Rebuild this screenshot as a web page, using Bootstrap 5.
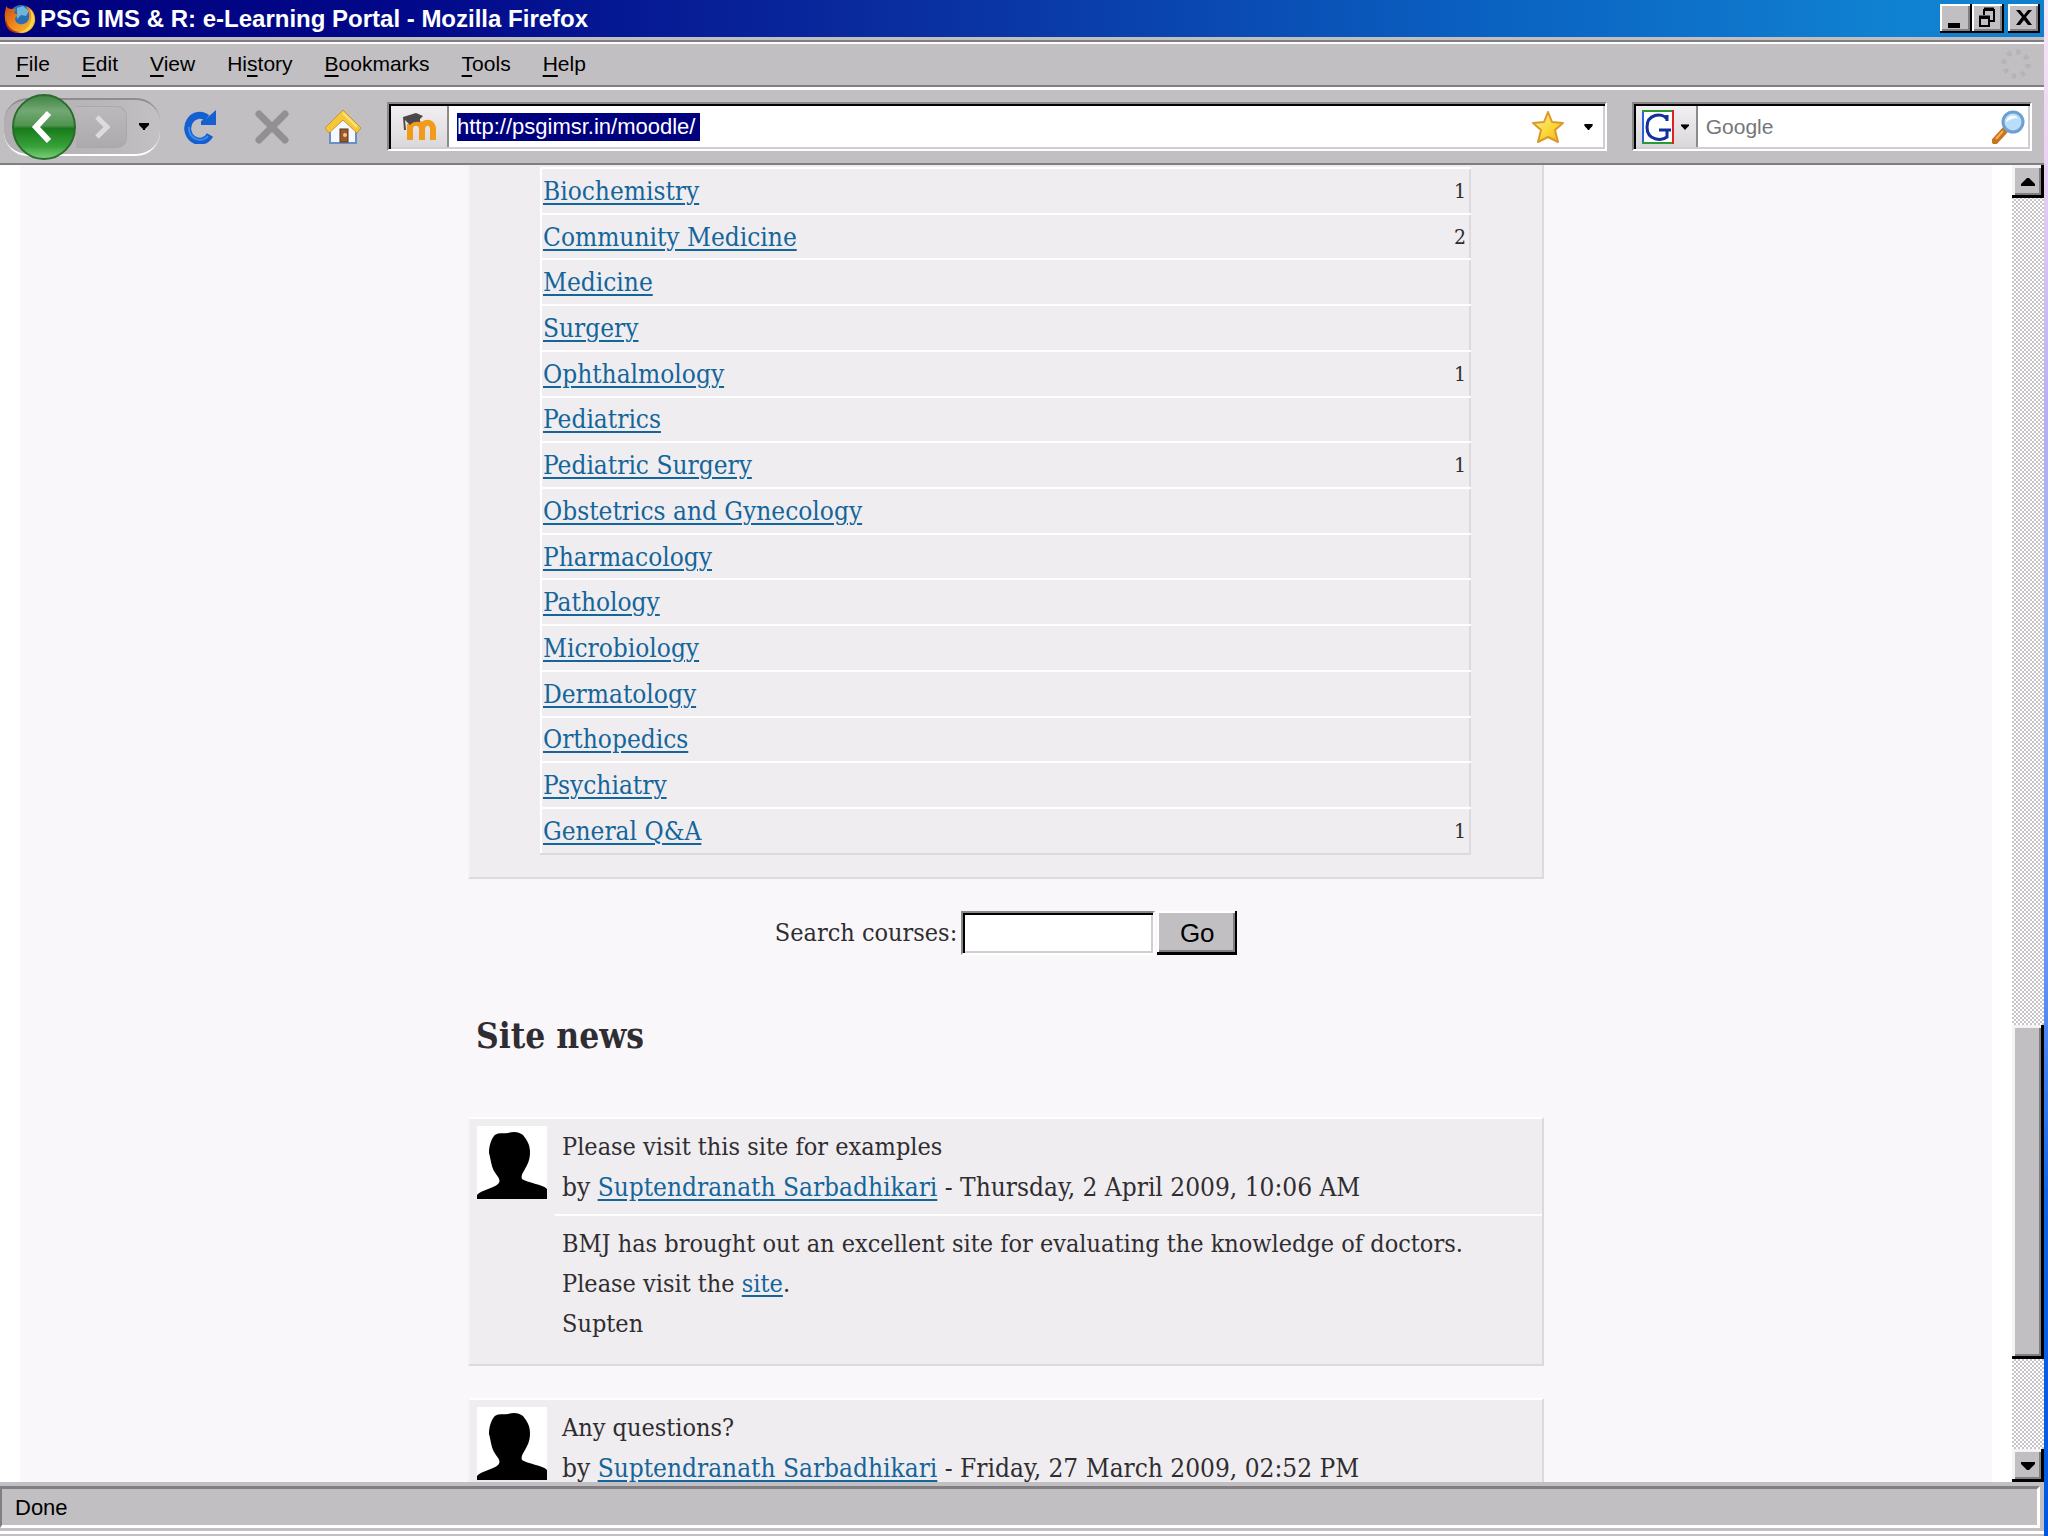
<!DOCTYPE html>
<html lang="en">
<head>
<meta charset="utf-8">
<meta name="viewport" content="width=device-width, initial-scale=1">
<title>PSG IMS &amp; R: e-Learning Portal - Mozilla Firefox</title>
<link href="https://cdn.jsdelivr.net/npm/bootstrap@5.3.0/dist/css/bootstrap.min.css" rel="stylesheet">
<style>
:root{--face:#c1bfc2;--shade:#807e82;--ink:#2f2d31;--panel:#efedf0;--edge:#dcdadf;--link:#14659a}
body{height:100vh;overflow:hidden;padding-right:4px;font-family:"Liberation Sans",Arial,sans-serif;font-size:22px;line-height:28px;color:#000;
 background:linear-gradient(#f6e8f4 0,#ecd2f2 10%,#b6b0f2 27%,#94b6f0 42%,#6a96f6 62%,#1264e6 78%,#0058e2 100%)}
svg{display:block;flex:none}
.app-window{background:var(--face)}
.title-bar,.menu-bar,.tool-bar,.status{flex:none}
.title-bar{height:37px;padding:0 4px;background:linear-gradient(90deg,#00007c 0,#02088a 20%,#0a2fa0 45%,#0a60c0 72%,#1082d2 93%,#1080cc 100%)}
.title-bar h1{font-size:24px;line-height:32px;font-weight:700;color:#fff}
.win-btn{width:32px;height:29px;padding:0;border:0;background:var(--face);box-shadow:inset -2px -2px #000,inset 2px 2px #fff,inset -4px -4px var(--shade)}
.win-btn svg{margin:auto}
.menu-bar{height:45px;padding:0 12px 0 16px;margin-top:3px;border-top:2px solid var(--shade);box-shadow:inset 0 2px #fff;font-size:21px;gap:32px}
.menu-bar a{color:#000;text-decoration:none;line-height:28px}
.menu-bar u{text-underline-offset:4px}
.tool-bar{height:80px;border-top:2px solid var(--shade);border-bottom:2px solid var(--shade);box-shadow:inset 0 3px #fff;padding:3px 12px 0 4px}
.tool-bar button{padding:0;border:0;background:none}
.nav-pill{height:58px;width:156px;border-radius:24px;border-top:2px solid #8f8d90;border-bottom:2px solid #fff;background:linear-gradient(90deg,#b1afb2,#bab8bb 70%,#c3c1c4);padding-left:8px}
.nav-pill .fwd{width:51px;height:42px;border:1px solid #aaa8ab;border-left:0;border-radius:0 10px 10px 0;background:linear-gradient(#bbb9bc,#acaaad)}
.sunk{height:49px;background:#fff;border:2px solid;border-color:#8a888b #fff #fff #8a888b;box-shadow:inset 2px 2px #000,inset -2px -2px #d0ced1}
.site-id{align-self:stretch;margin:2px 0 2px 2px;border-right:2px solid #8d8b8e;background:linear-gradient(#f1eff2,#dad8db)}
.url-text{width:243px;height:28px;padding:0;border:0;border-radius:0;background:#00007f;color:#fff;font-size:22px;line-height:28px}
.find-text{min-width:0;border:0;padding:0;background:none;font-size:21px;color:#77757a}
.find-text::placeholder{color:#77757a;opacity:1}
.view{min-height:0;background:#fff}
.page{min-width:0;margin:0 20px;background:#f9f7fa;color:var(--ink);font-family:"DejaVu Serif Condensed","DejaVu Serif",serif;font-size:25px;line-height:40px;overflow:hidden}
.page a{color:var(--link);text-decoration:underline;text-decoration-thickness:2px;text-underline-offset:3px}
.column-main{max-width:1076px}
.box{background:var(--panel);border:2px solid;border-color:#fff var(--edge) var(--edge) #f4f2f5}
.catalog{border-top:0;padding:2px 71px 22px 70px}
.catalog table{width:100%;height:688px;border-collapse:collapse;border-left:2px solid #fff;border-right:2px solid var(--edge);border-bottom:2px solid var(--edge);font-size:26px;line-height:36px}
.catalog td{padding:0 3px 0 1px;border-top:2px solid #fff}
.catalog .num{font-size:21px;text-align:right}
.find-course{margin:32px 0 61px;font-size:25px}
.find-course input{width:194px;height:44px;padding:0 6px}
.find-course label{margin-right:4px}
.go{width:80px;height:44px;border:0;padding:0;background:var(--face);font-family:"Liberation Sans",Arial,sans-serif;font-size:26px;color:#000;box-shadow:inset -2px -3px #000,inset 2px 2px #fff,inset -4px -5px var(--shade)}
.page h2{font-size:35px;line-height:40px;font-weight:700;margin:0 8px 61px}
.post{margin-bottom:32px;min-height:249px}
.portrait{width:85px;padding:7px}
.post header{padding:8px 7px 7px;border-bottom:2px solid #fff}
.post .byline{font-size:26px}
.post .words{padding:8px 7px 19px}
.post p{margin:0}
.scroller{width:32px;background:repeating-conic-gradient(#fff 0 25%,#c6c4c7 0 50%) 0 0/4px 4px}
.scroller button,.thumb{border:0;padding:0;background:var(--face);box-shadow:inset -3px -3px #000,inset 3px 3px #f4f2f5,inset -5px -5px var(--shade)}
.scroller button{height:33px;flex:none}
.scroller svg{margin:auto}
.track-top{flex:827 0 0}.thumb{flex:334 0 0}.track-end{flex:90 0 0}
.status{height:54px;padding-top:4px}
.status div{height:42px;padding:5px 13px;margin-right:4px;border:solid;border-width:3px;border-color:var(--shade) #fff #fff var(--shade);border-left-width:2px}
.status hr{margin:3px 0 0;border-top:3px solid #fff;opacity:1}
</style>
</head>
<body>
<svg width="0" height="0" class="position-absolute" aria-hidden="true">
 <symbol id="person" viewBox="0 0 70 73"><rect width="70" height="73" fill="#fff"/><path d="M17 10C20 6 27 8 31 7C37 5 42 6 46 9C50 14 53 19 53 26C53 35 50 39 48 43C45 48 44 50 45 53C50 57 66 58 70 63V73H0V69C4 64 17 62 21 58C25 54 20 50 17 45C14 39 14 34 12 27C12 20 14 14 17 10Z"/></symbol>
 <symbol id="down" viewBox="0 0 10 7"><path d="M0 0H10V2L6 6V7H4V6L0 2Z"/></symbol>
</svg>
<div class="app-window d-flex flex-column h-100">
 <div class="title-bar d-flex align-items-center">
  <svg class="me-1" width="32" height="30" viewBox="0 0 32 30"><defs><linearGradient id="fx" x2="1" y2="1"><stop stop-color="#c94a12"/><stop offset=".5" stop-color="#f08a1c"/><stop offset="1" stop-color="#f6c83a"/></linearGradient></defs><circle cx="17" cy="13" r="12" fill="#2a6fb4"/><path d="M13 4L19 2L25 7L22 12L17 11L13 15Z" fill="#6fb4dc"/><path d="M2 2C3 4 5 5 8 5L12 5L10 9L14 11L11 14C11 19 15 21 19 20C24 19 26 15 25 9C24 6 23 4 22 2C29 5 32 11 31 18C29 26 22 30 15 29C6 28 1 22 1 14C0 9 2 6 2 2Z" fill="url(#fx)"/><path d="M26 5C31 10 32 18 27 24C24 27 20 29 16 28C25 26 30 17 26 5Z" fill="#fbd64c"/><path d="M2 15C3 23 9 28 16 28C8 31 0 24 2 15Z" fill="#b5310f"/></svg>
  <h1 class="m-0 flex-grow-1">PSG IMS &amp; R: e-Learning Portal - Mozilla Firefox</h1>
  <button class="win-btn" aria-label="Minimize"><svg width="32" height="29"><path d="M8 19H20V24H8Z"/></svg></button>
  <button class="win-btn me-1" aria-label="Restore"><svg width="32" height="29" fill="none" stroke="#000" stroke-width="2"><path d="M12 11V6H22V17H18M11 6H23" /><path d="M12 5H22" stroke-width="3"/><path d="M8 14H17V22H8Z"/><path d="M7 13H18" stroke-width="3"/></svg></button>
  <button class="win-btn" aria-label="Close"><svg width="32" height="29"><path d="M8 6H12L16 11L20 6H24L18 13L24 21H20L16 16L12 21H8L14 13Z"/></svg></button>
 </div>
 <nav class="menu-bar d-flex align-items-center">
  <a href="#"><u>F</u>ile</a><a href="#"><u>E</u>dit</a><a href="#"><u>V</u>iew</a><a href="#">Hi<u>s</u>tory</a><a href="#"><u>B</u>ookmarks</a><a href="#"><u>T</u>ools</a><a href="#"><u>H</u>elp</a>
  <svg class="ms-auto" width="32" height="32" viewBox="-16 -16 32 32"><circle r="12" fill="none" stroke="#b5b3b6" stroke-width="5" stroke-dasharray="4 5.42"/></svg>
 </nav>
 <div class="tool-bar d-flex align-items-center">
  <div class="nav-pill d-flex align-items-center">
   <button aria-label="Back"><svg width="64" height="66" viewBox="0 0 64 66"><defs><linearGradient id="gr" x2="0" y2="1"><stop stop-color="#3f8443"/><stop offset=".25" stop-color="#72a873"/><stop offset=".48" stop-color="#4f9350"/><stop offset=".52" stop-color="#197a1c"/><stop offset=".8" stop-color="#36a138"/><stop offset="1" stop-color="#7fd07c"/></linearGradient></defs><ellipse cx="32" cy="33" rx="31" ry="32" fill="url(#gr)" stroke="#2a6b2e" stroke-width="2"/><path d="M37 19L24 33L37 47" fill="none" stroke="#fff" stroke-width="6"/></svg></button>
   <button class="fwd" aria-label="Forward"><svg width="50" height="40" viewBox="0 0 50 40"><path d="M21 10L31 20L21 30" fill="none" stroke="#dddbde" stroke-width="5"/></svg></button>
   <button class="ms-2 ps-1" aria-label="Recent pages"><svg width="10" height="7"><use href="#down"/></svg></button>
  </div>
  <button style="margin-left:24px" aria-label="Reload"><svg width="32" height="34" viewBox="0 0 32 34"><path d="M26 25A12 13 0 1 1 23 8" fill="none" stroke="#1560d0" stroke-width="7"/><path d="M32 0V15H17V11L23 8Z" fill="#1560d0"/><path d="M24 26A11 12 0 0 1 5 17" fill="none" stroke="#3a8bee" stroke-width="2"/></svg></button>
  <button style="margin-left:39px" aria-label="Stop"><svg width="34" height="34" viewBox="0 0 34 34"><path d="M4 4L30 30M30 4L4 30" stroke="#929093" stroke-width="7" stroke-linecap="round"/></svg></button>
  <button style="margin-left:36px" aria-label="Home"><svg width="36" height="34" viewBox="0 0 36 34"><path d="M5 17L18 6L31 17V33H5Z" fill="#f4f9ff" stroke="#6b8fc4" stroke-width="2"/><path d="M18 0L36 18L32 23L18 10L4 23L0 18Z" fill="#f5c73a" stroke="#c9962a"/><path d="M18 3L32 17" stroke="#fbe486" stroke-width="2"/><rect x="15" y="19" width="8" height="13" fill="#9a5a2a" stroke="#5e3213"/><circle cx="20" cy="25" r="2" fill="#e8c99a"/></svg></button>
  <div class="sunk d-flex align-items-center" style="margin-left:26px;flex:1221 1 0">
   <div class="site-id d-flex align-items-center" style="width:58px;padding-left:12px"><svg width="34" height="28" viewBox="0 0 34 28"><path d="M7 27V11M7 15C8 8 18 8 19 15V27M19 15C20 8 29 8 30 15V27" fill="none" stroke="#f29a1a" stroke-width="6"/><path d="M0 4L13 0L20 3L17 6V9C13 8 9 9 7 12L2 7L3 17H1Z" fill="#4a484b"/></svg></div>
   <input class="url-text ms-2" aria-label="Address" value="http://psgimsr.in/moodle/">
   <button class="ms-auto" aria-label="Bookmark"><svg width="32" height="34" viewBox="0 0 32 34"><defs><linearGradient id="st" x2="1" y2="1"><stop stop-color="#fff29a"/><stop offset=".6" stop-color="#fbd532"/><stop offset="1" stop-color="#f0a91e"/></linearGradient></defs><path d="M16 2L20 12L31 13L23 20L26 32L16 27L6 32L9 20L1 13L12 12Z" fill="url(#st)" stroke="#d99a2b" stroke-width="2" stroke-linejoin="round"/></svg></button>
   <button style="margin:0 12px 0 20px" aria-label="History list"><svg width="9" height="6" viewBox="0 0 10 7"><use href="#down"/></svg></button>
  </div>
  <div class="sunk d-flex align-items-center" style="margin-left:25px;flex:398 1 0">
   <button class="site-id d-flex align-items-center" style="width:62px;padding-left:6px;border-right:2px solid #8d8b8e;background:linear-gradient(#f1eff2,#dad8db)" aria-label="Search engine"><svg width="32" height="34" viewBox="0 0 32 34"><rect width="32" height="34" fill="#fff"/><path d="M1 34V1" stroke="#2f62d8" stroke-width="2"/><path d="M0 1H32M0 33H32" stroke="#2c9a30" stroke-width="2"/><path d="M31 0V34" stroke="#d22" stroke-width="2"/><path d="M25 11V5M25 9C20 2 5 4 5 17C5 31 20 31 25 27V20H17M23 20H29" fill="none" stroke="#12309c" stroke-width="3"/></svg><svg style="margin-left:7px" width="8" height="6" viewBox="0 0 10 7"><use href="#down"/></svg></button>
   <input class="find-text flex-grow-1" aria-label="Web search" style="margin-left:8px" placeholder="Google">
   <button class="me-1" aria-label="Search"><svg width="34" height="34" viewBox="0 0 34 34"><path d="M3 31L14 19" stroke="#c8741c" stroke-width="7" stroke-linecap="round"/><path d="M4 29L11 21" stroke="#f2ae5a" stroke-width="2"/><circle cx="21" cy="12" r="10" fill="#b9defa" stroke="#6f9fd0" stroke-width="3"/><path d="M14 12C14 6 22 3 26 8C22 8 17 10 14 12Z" fill="#f4fbff"/></svg></button>
  </div>
 </div>
 <div class="view d-flex flex-grow-1">
  <main class="page flex-grow-1"><div class="column-main mx-auto">
   <section class="box catalog">
    <table><tbody>
     <tr><td><a href="#">Biochemistry</a></td><td class="num">1</td></tr>
     <tr><td><a href="#">Community Medicine</a></td><td class="num">2</td></tr>
     <tr><td><a href="#">Medicine</a></td><td class="num"></td></tr>
     <tr><td><a href="#">Surgery</a></td><td class="num"></td></tr>
     <tr><td><a href="#">Ophthalmology</a></td><td class="num">1</td></tr>
     <tr><td><a href="#">Pediatrics</a></td><td class="num"></td></tr>
     <tr><td><a href="#">Pediatric Surgery</a></td><td class="num">1</td></tr>
     <tr><td><a href="#">Obstetrics and Gynecology</a></td><td class="num"></td></tr>
     <tr><td><a href="#">Pharmacology</a></td><td class="num"></td></tr>
     <tr><td><a href="#">Pathology</a></td><td class="num"></td></tr>
     <tr><td><a href="#">Microbiology</a></td><td class="num"></td></tr>
     <tr><td><a href="#">Dermatology</a></td><td class="num"></td></tr>
     <tr><td><a href="#">Orthopedics</a></td><td class="num"></td></tr>
     <tr><td><a href="#">Psychiatry</a></td><td class="num"></td></tr>
     <tr><td><a href="#">General Q&amp;A</a></td><td class="num">1</td></tr>
    </tbody></table>
   </section>
   <form class="find-course d-flex justify-content-center align-items-center">
    <label for="course">Search courses:</label><input id="course" class="sunk"><button type="button" class="go" style="margin-left:2px">Go</button>
   </form>
   <h2>Site news</h2>
   <article class="box post d-flex">
    <div class="portrait"><svg width="70" height="73" role="img" aria-label="User picture"><use href="#person"/></svg></div>
    <div class="flex-grow-1">
     <header><p>Please visit this site for examples</p><p class="byline">by <a href="#">Suptendranath Sarbadhikari</a> - Thursday, 2 April 2009, 10:06 AM</p></header>
     <div class="words"><p>BMJ has brought out an excellent site for evaluating the knowledge of doctors.</p><p>Please visit the <a href="#">site</a>.</p><p>Supten</p></div>
    </div>
   </article>
   <article class="box post d-flex">
    <div class="portrait"><svg width="70" height="73" role="img" aria-label="User picture"><use href="#person"/></svg></div>
    <div class="flex-grow-1">
     <header><p>Any questions?</p><p class="byline">by <a href="#">Suptendranath Sarbadhikari</a> - Friday, 27 March 2009, 02:52 PM</p></header>
    </div>
   </article>
  </div></main>
  <div class="scroller d-flex flex-column">
   <button aria-label="Scroll up"><svg width="14" height="8"><path d="M0 8V6L6 0H8L14 6V8Z"/></svg></button>
   <div class="track-top"></div><div class="thumb"></div><div class="track-end"></div>
   <button aria-label="Scroll down"><svg width="14" height="8"><path d="M0 0V2L6 8H8L14 2V0Z"/></svg></button>
  </div>
 </div>
 <footer class="status"><div>Done</div><hr></footer>
</div>
<script src="https://cdn.jsdelivr.net/npm/bootstrap@5.3.0/dist/js/bootstrap.bundle.min.js"></script>
</body>
</html>
